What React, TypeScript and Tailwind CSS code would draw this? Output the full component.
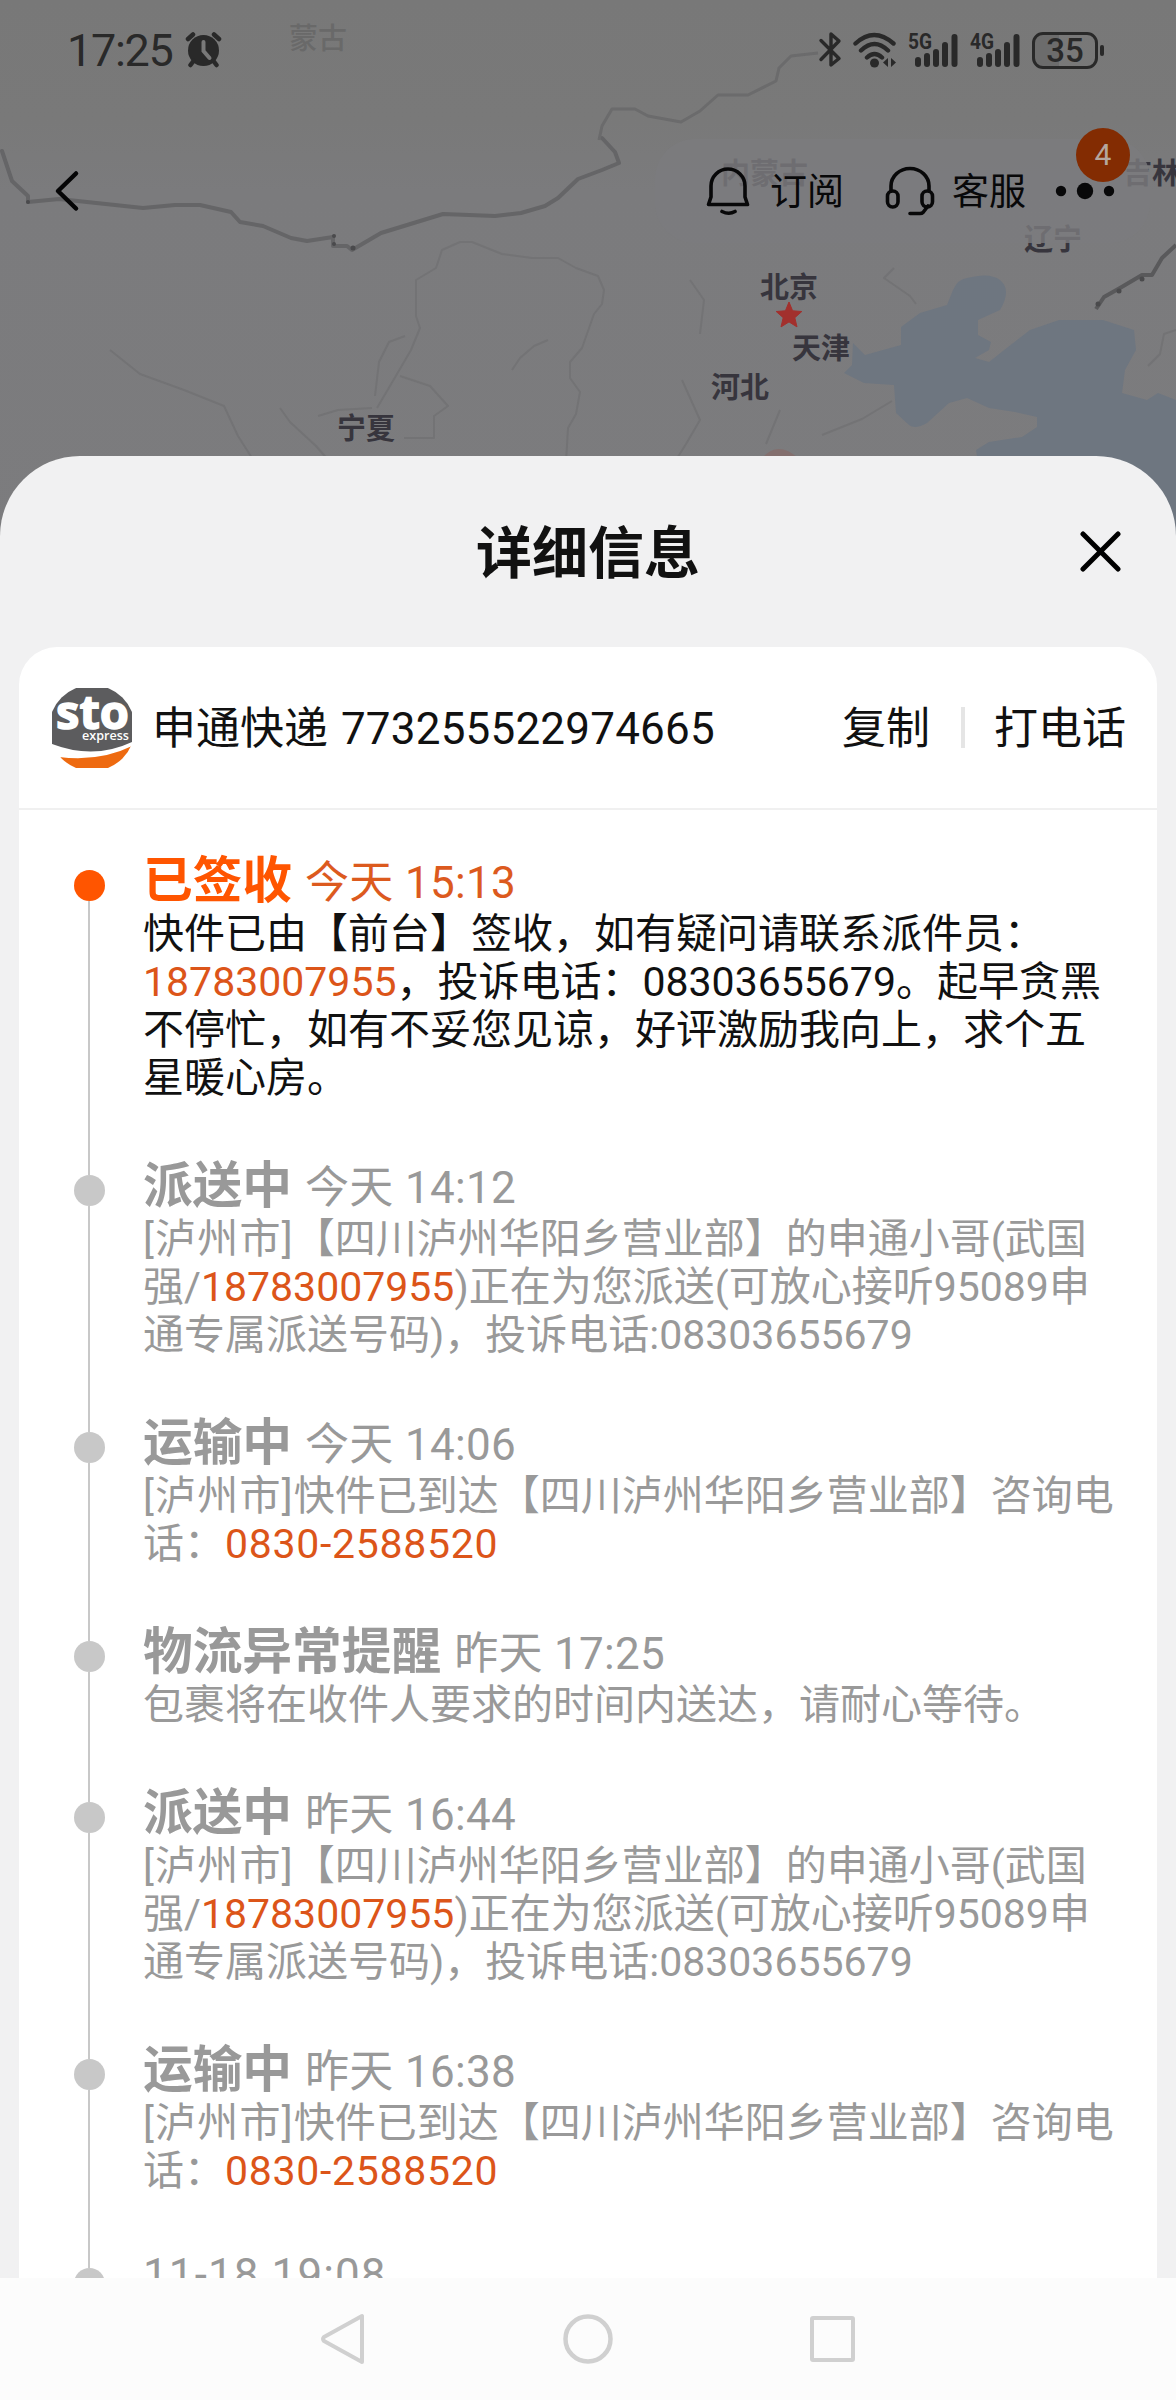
interface TrackEvent {
  status?: string;
  time: string;
  active?: boolean;
  lines: string[];
}

const events: TrackEvent[] = [
  {
    status: '已签收',
    time: '今天 15:13',
    active: true,
    lines: [
      '快件已由【前台】签收，如有疑问请联系派件员：',
      '{18783007955}，投诉电话：08303655679。起早贪黑',
      '不停忙，如有不妥您见谅，好评激励我向上，求个五',
      '星暖心房。',
    ],
  },
  {
    status: '派送中',
    time: '今天 14:12',
    lines: [
      '[泸州市]【四川泸州华阳乡营业部】的申通小哥(武国',
      '强/{18783007955})正在为您派送(可放心接听95089申',
      '通专属派送号码)，投诉电话:08303655679',
    ],
  },
  {
    status: '运输中',
    time: '今天 14:06',
    lines: ['[泸州市]快件已到达【四川泸州华阳乡营业部】咨询电', '话：{0830-2588520}'],
  },
  {
    status: '物流异常提醒',
    time: '昨天 17:25',
    lines: ['包裹将在收件人要求的时间内送达，请耐心等待。'],
  },
  {
    status: '派送中',
    time: '昨天 16:44',
    lines: [
      '[泸州市]【四川泸州华阳乡营业部】的申通小哥(武国',
      '强/{18783007955})正在为您派送(可放心接听95089申',
      '通专属派送号码)，投诉电话:08303655679',
    ],
  },
  {
    status: '运输中',
    time: '昨天 16:38',
    lines: ['[泸州市]快件已到达【四川泸州华阳乡营业部】咨询电', '话：{0830-2588520}'],
  },
  { time: '11-18 19:08', lines: [] },
];

function MapBackdrop() {
  return (
    <svg className="absolute inset-0" width="1176" height="600" viewBox="0 0 1176 600" fill="none">
      <defs>
        <linearGradient id="fade" x1="0" y1="0" x2="0" y2="1">
          <stop offset="0" stopColor="#787878" />
          <stop offset="0.2" stopColor="#797979" />
          <stop offset="0.32" stopColor="#7b7b7d" />
          <stop offset="1" stopColor="#7c7c7e" />
        </linearGradient>
      </defs>
      <rect width="1176" height="600" fill="url(#fade)" />
      {/* sea */}
      <path
        d="M853 343L865 355L901 345L901 327L920 313L947 305L953 290Q958 279 967 278Q990 272 1000 280Q1012 290 1000 310L978 320V335L991 342L989 350L975 358L989 362L1008 347L1030 330L1059 320H1103L1134 330L1136 350L1125 370L1122 393L1147 400L1158 393L1176 400V600H1000L976 450L989 442L1022 437L1037 427V417L1015 412L989 408L967 398L949 403L927 423Q915 430 909 425L896 413L894 385L864 383L844 373L852 365Z"
        fill="#6e7680"
      />
      {/* borders */}
      <path
        d="M2 151l10 30 16 15v6l31-3 84 9 32-3h25l31 7 9 10 23 4 28 12 16 3 26-4v9h14l5 4 29-17 62-19 52 2 26-3 24-7 13-8 20-19 24-9 17-7-4-11-13-14"
        stroke="#656567"
        strokeWidth="4"
        strokeLinejoin="round"
        strokeLinecap="round"
      />
      <path
        d="M599 140l3-14 10-17h23l13 7 33 6 19-11 18-16h30l28-14 3-13 12-12 27-3"
        stroke="#6b6b6c"
        strokeWidth="3"
        strokeLinejoin="round"
      />
      <path d="M1176 245l-14 13-10 17h-10l-22 13-16 9-8 12" stroke="#59595b" strokeWidth="4" strokeLinejoin="round" />
      <g fill="#4a4a4c">
        <circle cx="28" cy="202" r="2" />
        <circle cx="334" cy="236" r="2" />
        <circle cx="334" cy="244" r="2" />
        <circle cx="353" cy="248" r="2.5" />
        <circle cx="1142" cy="279" r="2.5" />
        <circle cx="1119" cy="291" r="2.5" />
        <circle cx="1098" cy="304" r="2.5" />
      </g>
      <g stroke="#737375" strokeWidth="2" strokeLinejoin="round">
        <path d="M377 408l20-34 14-24 9-22-4-12v-36l20-12 6-18 18-8h12l30 12 30 4 26 0 18 10 22 8 6 14-2 14-8 10-12 34-12 14v16l10 14-4 22-8 14-2 34" />
        <path d="M400 376l30 10 18 20-14 10v22h-30M375 396l4-34 10-20 16-6M512 370l8-12 14-12 14-6" />
        <path d="M318 416l20-6 34-2M316 490l14-12v-16l-14-16-26-24-10-14M110 350l30 24 44 16 40 16 14 30 14 22" />
        <path d="M690 280l14 20-4 34M682 380l18 40-14 24-10 16M822 435l40-16 30-18M780 410l-14 34M894 268l-10 10 26 18 6 8M1176 330l-12 4-4 20-12 12" />
      </g>
      <path d="M762 458q16-18 36 0z" fill="#836f6e" />
      <g className="font-['Noto_Sans_CJK_SC',sans-serif]" fontSize="29">
        <text x="289" y="49" fill="#696969" fontWeight="500">蒙古</text>
        <g fill="#37353d" fontWeight="700">
          <text x="721" y="184">内蒙古</text>
          <text x="1123" y="184">吉林</text>
          <text x="1024" y="250">辽宁</text>
          <text x="760" y="298">北京</text>
          <text x="792" y="359">天津</text>
          <text x="711" y="398">河北</text>
          <text x="337" y="439">宁夏</text>
        </g>
      </g>
      <path
        d="M789 302l3.600 8.800 9.200.700-7 6.200 2.200 9.200-8-5-8 5 2.200-9.200-7-6.200 9.200-.700z"
        fill="#a2302d"
        stroke="#a2302d"
      />
    </svg>
  );
}

function Signal({ label }: { label: string }) {
  return (
    <svg width="52" height="42" viewBox="0 0 52 42" fill="#292929">
      <text x="0" y="20" fontSize="22" fontWeight="700" textLength="24" lengthAdjust="spacingAndGlyphs">
        {label}
      </text>
      <rect x="7" y="28" width="6" height="10" rx="3" />
      <rect x="16" y="24" width="6" height="14" rx="3" />
      <rect x="25" y="20" width="6" height="18" rx="3" />
      <rect x="34" y="13" width="6" height="25" rx="3" />
      <rect x="43.500" y="5" width="6" height="33" rx="3" />
    </svg>
  );
}

function StatusBar() {
  return (
    <div className="relative flex h-[100px] items-center justify-between pr-[72px] pl-[67px] text-[#292929]">
      <div className="flex items-center gap-3">
        <span className="w-[106px] pt-0.5 text-[45px] leading-[50px] tracking-[-1.3px] whitespace-nowrap">17:25</span>
        <svg width="37" height="40" viewBox="0 0 37 40">
          <circle cx="18.500" cy="20.500" r="15.500" fill="#292929" />
          <path d="M3 9l5-4.500M34 9l-5-4.500M5.500 35l3-4M31.500 35l-3-4" stroke="#292929" strokeWidth="4.500" strokeLinecap="round" />
          <path d="M18.500 12v9l6 7" stroke="#797979" strokeWidth="4" fill="none" strokeLinecap="round" />
        </svg>
      </div>
      <div className="flex items-center">
        <svg width="24" height="40" viewBox="0 0 24 40" fill="none" stroke="#292929" strokeWidth="3.400" strokeLinejoin="round" strokeLinecap="round">
          <path d="M3 10.500l18 18-8 6.500V4l8 7L3 29.500" />
        </svg>
        <svg className="ml-2.5" width="46" height="40" viewBox="0 0 46 40" fill="none">
          <path d="M3.500 13.500q18.500-17 38 0M9 20.500q13.500-13 27 0M15 27.500q7.500-7 15 0" stroke="#292929" strokeWidth="4.400" strokeLinecap="round" />
          <circle cx="22.500" cy="33" r="4.500" fill="#292929" />
          <path d="M36 28v9l-5-4.500zM39 28v9l5-4.500z" fill="#292929" />
        </svg>
        <div className="ml-2.5">
          <Signal label="5G" />
        </div>
        <div className="ml-2.5">
          <Signal label="4G" />
        </div>
        <div className="ml-2.5 flex items-center gap-0.5">
          <div className="flex h-[37px] w-[66px] items-center justify-center rounded-[11px] border-3 border-[#292929] bg-linear-to-r from-[#6c6c6c] from-40% to-transparent to-40% text-[33px] leading-none font-medium">
            35
          </div>
          <div className="h-[11px] w-1 rounded-sm bg-[#292929]" />
        </div>
      </div>
    </div>
  );
}

function TopActions() {
  return (
    <div className="relative flex h-[356px] items-start justify-between pt-[39px] pr-[26px] pl-[54px]">
      <svg className="mt-[31px]" width="28" height="42" viewBox="0 0 28 42" fill="none">
        <path d="M22 3.500L4 21L22 38.500" stroke="#050506" strokeWidth="4.500" strokeLinecap="round" strokeLinejoin="round" />
      </svg>
      <div className="flex h-[104px] items-center rounded-[40px] bg-[#7c7c7e]/80 pr-[35px] pl-[51px] text-[37px] text-[#080809]">
        <svg width="44" height="50" viewBox="0 0 44 50" fill="none" stroke="#080809" strokeWidth="3.600" strokeLinejoin="round" strokeLinecap="round">
          <path d="M5 31V20a17 17 0 0 1 34 0v11l2.500 7.500h-39zM16 45.500q7 3.500 13 0" />
        </svg>
        <span className="ml-5 pt-[3px]">订阅</span>
        <svg className="ml-[41px]" width="50" height="50" viewBox="0 0 50 50" fill="none" stroke="#080809" strokeWidth="3.600" strokeLinejoin="round" strokeLinecap="round">
          <path d="M6 25v-5a19 17.500 0 0 1 38 0v5M43 40l-5 6.500q-1 1-3 1h-10" />
          <rect x="2.500" y="25" width="10.500" height="16" rx="5.200" />
          <rect x="37" y="25" width="10.500" height="16" rx="5.200" />
        </svg>
        <span className="ml-[17px] pt-[3px]">客服</span>
        <div className="relative ml-[29px]">
          <svg width="60" height="20" viewBox="0 0 60 20" fill="#080809">
            <circle cx="6" cy="10" r="5.200" />
            <circle cx="30" cy="10" r="8.200" />
            <circle cx="54" cy="10" r="5.200" />
          </svg>
          <span className="absolute -top-[53px] left-[21px] flex h-[54px] w-[54px] items-center justify-center rounded-full bg-[#832c02] text-[30px] leading-none text-[#b5a79f]">
            4
          </span>
        </div>
      </div>
    </div>
  );
}

function StoLogo() {
  return (
    <svg width="80" height="80" viewBox="0 0 80 80">
      <defs>
        <clipPath id="badge">
          <circle cx="40" cy="40" r="43" />
        </clipPath>
      </defs>
      <g clipPath="url(#badge)">
        <rect width="80" height="80" fill="#fff" />
        <path d="M0 0H80V54Q42 72 0 56Z" fill="#5c5c5e" />
        <path d="M7 69Q48 74 80 58V80H7Z" fill="#ee6a10" />
      </g>
      <g fill="#fff" className="font-['Open_Sans',sans-serif]">
        <text x="4" y="41" fontSize="47" fontWeight="700" textLength="73" lengthAdjust="spacingAndGlyphs" stroke="#fff" strokeWidth="1.500">
          sto
        </text>
        <text x="30" y="52" fontSize="13" fontWeight="600" textLength="47" lengthAdjust="spacingAndGlyphs">
          express
        </text>
      </g>
    </svg>
  );
}

function EventLine({ text }: { text: string }) {
  return (
    <p className="h-12 whitespace-nowrap">
      {text.split(/(\{.*?\}|\[.*?\])/).map((part, i) => {
        if (part.startsWith('{')) {
          const phone = part.slice(1, -1);
          return (
            <span key={i} className={`text-[#dc5519] ${phone.includes('-') ? 'tracking-[0.7px]' : ''}`}>
              {phone}
            </span>
          );
        }
        return (
          <span key={i} className={part.startsWith('[') ? 'tracking-[1.2px]' : ''}>
            {part}
          </span>
        );
      })}
    </p>
  );
}

function EventItem({ event, first }: { event: TrackEvent; first: boolean }) {
  const { status, time, active, lines } = event;
  return (
    <li className="flex pl-[55px]">
      {/* Rail */}
      <div className="flex w-[31px] flex-col items-center">
        <div className={`mr-px h-[19px] w-0.5 ${first ? '' : 'bg-[#c8c8c8]'}`} />
        <div className={`h-[31px] w-[31px] rounded-full ${active ? 'bg-[#ff5500]' : 'bg-[#c8c8c8]'}`} />
        <div className="mr-px w-0.5 flex-1 bg-[#c8c8c8]" />
      </div>

      <div className={`ml-[38px] pt-0.5 pb-[54px] ${active ? 'text-[#111]' : 'text-[#999]'}`}>
        <div className={`flex h-[57px] items-baseline gap-[13px] leading-[57px] ${active ? 'text-[#dc5a1e]' : ''}`}>
          {status && <h3 className={`text-[49.7px] font-bold ${active ? 'text-[#ff5500]' : ''}`}>{status}</h3>}
          <span className={`text-[44px] whitespace-nowrap ${status ? 'tracking-[0.3px]' : '-mt-1 tracking-[1.1px]'}`}>
            {time}
          </span>
        </div>
        <div className="text-[41px] leading-[48px]">
          {lines.map((line) => (
            <EventLine key={line} text={line} />
          ))}
        </div>
      </div>
    </li>
  );
}

function NavBar() {
  return (
    <div className="relative flex h-[122px] items-center justify-center gap-[194px] bg-[#fcfcfc]">
      <svg width="50" height="54" viewBox="0 0 50 54" fill="none" stroke="#d0d0d0" strokeWidth="4" strokeLinejoin="round">
        <path d="M45 4v46L7 29q-2-2 0-4z" />
      </svg>
      <svg width="54" height="54" viewBox="0 0 54 54" fill="none" stroke="#d0d0d0" strokeWidth="4.500">
        <circle cx="27" cy="27" r="22.500" />
      </svg>
      <svg width="50" height="54" viewBox="0 0 50 54" fill="none" stroke="#d0d0d0" strokeWidth="4">
        <rect x="3" y="6" width="41" height="42" rx="1" />
      </svg>
    </div>
  );
}

export default function App() {
  return (
    <div className="relative h-[2400px] w-[1176px] overflow-hidden font-['Roboto','Noto_Sans_CJK_SC',sans-serif]">
      <MapBackdrop />
      <StatusBar />
      <TopActions />

      {/* Bottom sheet */}
      <div className="relative flex h-[1822px] flex-col overflow-hidden rounded-t-[80px] bg-[#f1f1f2] px-[19px]">
        <div className="flex h-[191px] shrink-0 items-center">
          <div className="w-[77px]" />
          <h2 className="flex-1 pt-1 text-center text-[56px] leading-none font-bold text-[#111]">详细信息</h2>
          <svg className="mr-9" width="41" height="41" viewBox="0 0 41 41">
            <path d="M3 3L38 38M38 3L3 38" stroke="#000" strokeWidth="5" strokeLinecap="round" />
          </svg>
        </div>

        <div className="rounded-t-[38px] bg-white">
          <div className="flex h-[163px] items-center border-b-2 border-[#f0f0f0] pr-[31px] pl-[33px] text-[44px] leading-none whitespace-nowrap text-[#111]">
            <StoLogo />
            <span className="ml-5 pt-[3px]">
              申通快递 <span className="ml-0.5 tracking-[0.2px]">773255522974665</span>
            </span>
            <span className="ml-auto pt-[3px]">复制</span>
            <span className="mr-[29px] ml-[31px] h-[41px] w-1 bg-[#e5e5e5]" />
            <span className="pt-[3px]">打电话</span>
          </div>
          <ul className="pt-[41px]">
            {events.map((event, i) => (
              <EventItem key={i} event={event} first={i === 0} />
            ))}
          </ul>
        </div>
      </div>

      <NavBar />
    </div>
  );
}
